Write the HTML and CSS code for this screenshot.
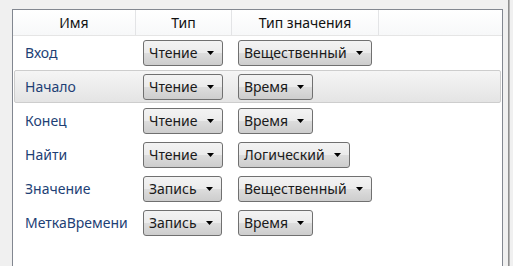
FILE: index.html
```html
<!DOCTYPE html>
<html>
<head>
<meta charset="utf-8">
<link rel="stylesheet" href="styles.css">
</head>
<body>
<div class="screen">
  <div class="list">
    <div class="header">
      <div class="hcell">Имя</div>
      <div class="hcell">Тип</div>
      <div class="hcell">Тип значения</div>
      <div class="hcell filler"></div>
    </div>
    <div class="rows">
      <div class="row">
        <div class="name">Вход</div>
        <div class="cell c2"><span class="combo">Чтение<svg class="arrow" viewBox="0 0 7 4"><path d="M0 0H7L3.5 4Z"/></svg></span></div>
        <div class="cell c3"><span class="combo">Вещественный<svg class="arrow" viewBox="0 0 7 4"><path d="M0 0H7L3.5 4Z"/></svg></span></div>
      </div>
      <div class="row selected">
        <div class="name">Начало</div>
        <div class="cell c2"><span class="combo">Чтение<svg class="arrow" viewBox="0 0 7 4"><path d="M0 0H7L3.5 4Z"/></svg></span></div>
        <div class="cell c3"><span class="combo">Время<svg class="arrow" viewBox="0 0 7 4"><path d="M0 0H7L3.5 4Z"/></svg></span></div>
      </div>
      <div class="row">
        <div class="name">Конец</div>
        <div class="cell c2"><span class="combo">Чтение<svg class="arrow" viewBox="0 0 7 4"><path d="M0 0H7L3.5 4Z"/></svg></span></div>
        <div class="cell c3"><span class="combo">Время<svg class="arrow" viewBox="0 0 7 4"><path d="M0 0H7L3.5 4Z"/></svg></span></div>
      </div>
      <div class="row">
        <div class="name">Найти</div>
        <div class="cell c2"><span class="combo">Чтение<svg class="arrow" viewBox="0 0 7 4"><path d="M0 0H7L3.5 4Z"/></svg></span></div>
        <div class="cell c3"><span class="combo">Логический<svg class="arrow" viewBox="0 0 7 4"><path d="M0 0H7L3.5 4Z"/></svg></span></div>
      </div>
      <div class="row">
        <div class="name">Значение</div>
        <div class="cell c2"><span class="combo">Запись<svg class="arrow" viewBox="0 0 7 4"><path d="M0 0H7L3.5 4Z"/></svg></span></div>
        <div class="cell c3"><span class="combo">Вещественный<svg class="arrow" viewBox="0 0 7 4"><path d="M0 0H7L3.5 4Z"/></svg></span></div>
      </div>
      <div class="row">
        <div class="name">МеткаВремени</div>
        <div class="cell c2"><span class="combo">Запись<svg class="arrow" viewBox="0 0 7 4"><path d="M0 0H7L3.5 4Z"/></svg></span></div>
        <div class="cell c3"><span class="combo">Время<svg class="arrow" viewBox="0 0 7 4"><path d="M0 0H7L3.5 4Z"/></svg></span></div>
      </div>
    </div>
  </div>
  <div class="edge"></div>
</div>
</body>
</html>
```

FILE: styles.css
```css
html, body {
  margin: 0;
  padding: 0;
  background: #f0f0f0;
}

body {
  font-family: "Segoe UI", "Noto Sans", sans-serif;
  font-size: 14px;
  color: #000;
}

.screen {
  display: flex;
  height: 266px;
  padding-left: 12px;
  box-sizing: border-box;
  overflow: hidden;
}

.list {
  margin-top: 9px;
  width: 491px;
  box-sizing: border-box;
  border: 1px solid #828790;
  border-bottom: none;
  background: #fff;
}

.header {
  display: grid;
  grid-template-columns: 123px 96px 147px 1fr;
  height: 26px;
  box-sizing: border-box;
  border-bottom: 1px solid #e5e5e5;
  background: linear-gradient(#ffffff, #f7f8f9);
}

.hcell {
  line-height: 25px;
  text-align: center;
  border-right: 1px solid #e3e4e6;
  color: #111;
}

.hcell.filler {
  border-right: none;
  margin-right: 2px;
}

.row {
  display: grid;
  grid-template-columns: 121px 96px 147px 1fr;
  align-items: center;
  height: 33px;
  box-sizing: border-box;
  margin: 0 1px 1px 1px;
  border: 1px solid transparent;
  border-radius: 2px;
}

.row.selected {
  border-color: #cdcdcd;
  background: linear-gradient(#f5f5f5, #e4e4e4);
}

.name {
  padding-left: 10px;
  color: #1e3f75;
  white-space: nowrap;
}

.cell.c2 {
  padding-left: 7px;
}

.cell.c3 {
  padding-left: 6px;
}

.combo {
  display: inline-flex;
  align-items: center;
  gap: 9px;
  height: 26px;
  box-sizing: border-box;
  padding: 0 8px 0 5px;
  border: 1px solid #707070;
  border-radius: 3px;
  background: linear-gradient(#f3f3f3 0%, #ebebeb 50%, #dddddd 50%, #cdcdcd 100%);
  color: #1a1a1a;
  white-space: nowrap;
}

.arrow {
  width: 7px;
  height: 4px;
  fill: #000;
}

.edge {
  margin-left: 5px;
  width: 2px;
  box-sizing: border-box;
  border-left: 1px solid #8e8e8e;
  border-right: 1px solid #b4b4b4;
}
```
